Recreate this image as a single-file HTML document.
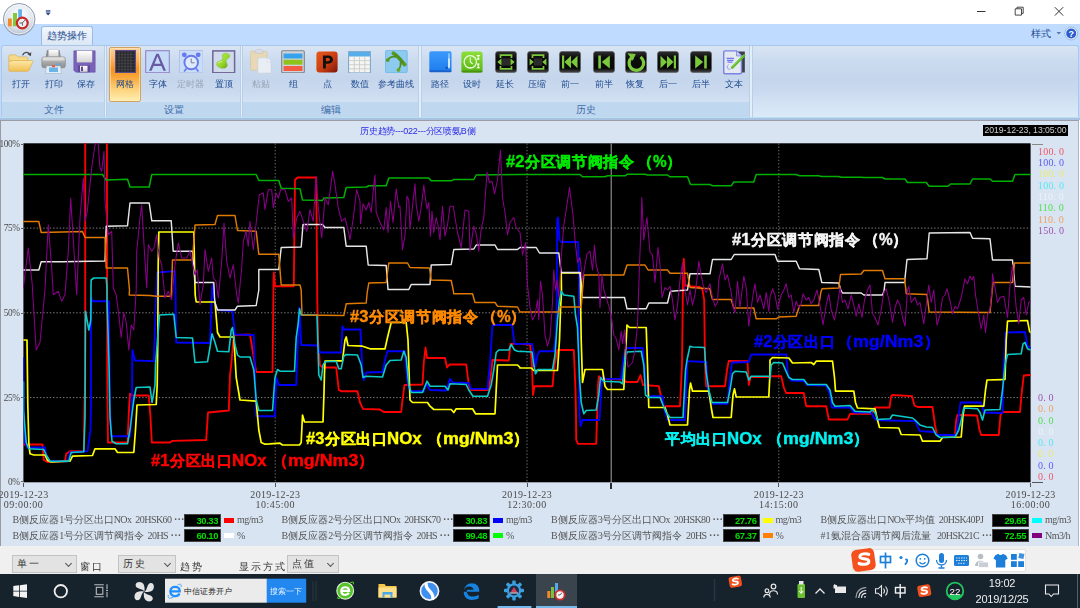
<!DOCTYPE html>
<html lang="zh">
<head>
<meta charset="utf-8">
<title>历史趋势</title>
<style>
*{box-sizing:border-box;margin:0;padding:0}
html,body{width:1080px;height:608px;overflow:hidden;background:#fff}
body{position:relative;font-family:"Liberation Sans",sans-serif;font-size:10px;color:#15428b}
#stage{position:absolute;left:0;top:0;width:1080px;height:608px;filter:blur(.45px)}
.abs{position:absolute}
#titlebar{left:0;top:0;width:1080px;height:24px;background:#fff}
#tabrow{left:0;top:24px;width:1080px;height:20px;background:#bfdbff}
#ribbon{left:0;top:44px;width:1080px;height:76px;background:#bfdbff}
.rl{position:absolute;top:78px;width:60px;text-align:center;font-size:9.300px;line-height:12px;color:#1e4a8e;white-space:nowrap}
.rl.dis{color:#98a3b3}
.hotbtn{background:linear-gradient(#fbd09c 0,#f9b25c 22%,#f7931e 40%,#f9a63a 55%,#fdd581 80%,#feeeb0 100%);border:1px solid #d3a35c;border-radius:2px;box-shadow:inset 0 0 0 1px rgba(255,240,200,.5)}
.btn{position:absolute;top:46px;width:34px;height:56px;text-align:center}
.btn svg{position:absolute;left:50%;top:2px;margin-left:-13px;width:26px;height:26px}
.btn span{position:absolute;left:-10px;right:-10px;top:32px;line-height:12px;font-size:10px;color:#15428b;white-space:nowrap}
.btn.dis span{color:#8d9aae}
.btn.hot{background:linear-gradient(#f8b665 0,#f99a2e 30%,#fb9322 45%,#fdc765 75%,#fee9a6 100%);border:1px solid #c99a56;border-radius:2px}
#rpanel{position:absolute;left:1px;top:.5px;width:1078px;height:73.500px;border:1px solid #aac6e8;border-bottom:none;border-radius:3px 3px 0 0;background:linear-gradient(#d9e5f4 0,#cbdbef 20%,#c5d6ec 45%,#cad9ee 62%,#d6e5f5 85%,#dcebf9 100%)}
.cap{position:absolute;top:58.400px;height:15px;background:#c0d8ef;color:#3e6aaa;text-align:center;line-height:15px;font-size:9.600px}
.sep{position:absolute;top:2px;width:1.600px;height:72px;background:#e2eefa;box-shadow:-1px 0 0 #b9cfe9,1px 0 0 #b9cfe9}
#rb1{left:0;top:117.400px;width:1080px;height:1px;background:#b9e0ee}
#rb2{left:0;top:118.400px;width:1080px;height:1.600px;background:#a9c2e2}
#panel{left:0;top:120px;width:1079px;height:426px;background:#d8e4f2;border-left:1.300px solid #9a9aa2;border-top:1px solid #9c9ca6;border-right:1px solid #a9b4c6}
.plot{position:absolute;left:0;top:0}
.ax{position:absolute;font-family:"Liberation Serif",serif;font-size:10px;color:#4a4a4a;white-space:nowrap;line-height:10px}
.yl{width:20px;text-align:right;left:-.5px;font-size:9.300px;letter-spacing:-.45px}
.xl{width:80px;text-align:center;line-height:10.5px}
.rv{position:absolute;left:1038px;font-family:"Liberation Serif",serif;font-size:10px;line-height:11px;white-space:nowrap;letter-spacing:.2px}
.lg{position:absolute;font-family:"Liberation Serif",serif;font-size:10px;color:#555;white-space:nowrap;line-height:12px}
.lg .l{letter-spacing:-.55px}
.vb{position:absolute;width:37px;height:13px;background:#000;border:1px solid #444;color:#00dd00;font-family:"Liberation Sans",sans-serif;font-size:9.500px;font-weight:bold;letter-spacing:-.45px;line-height:11px;text-align:right;padding-right:2px}
.sw{position:absolute;width:10px;height:5px;margin-left:-.7px}
#toolbar{left:0;top:546px;width:1080px;height:28.500px;background:#f0f0f0}
.combo{position:absolute;top:9px;height:18px;background:#e3e3e3;border:1px solid #c3c3c3;font-size:10px;color:#333;line-height:16px;padding-left:4px;letter-spacing:2px}
.combo i{position:absolute;right:5px;top:5px;width:5px;height:5px;border-right:1px solid #555;border-bottom:1px solid #555;transform:rotate(45deg)}
.tl{position:absolute;top:15px;font-size:10px;color:#333;line-height:12px;letter-spacing:2px;white-space:nowrap}
#taskbar{left:0;top:574px;width:1080px;height:40px;background:#16222c}
.cl{position:absolute;font-weight:bold;font-size:16px;line-height:18px;white-space:nowrap;-webkit-text-stroke:.4px currentColor}
</style>
</head>
<body>
<div id="stage">
<div id="titlebar" class="abs"></div>
<div id="tabrow" class="abs"></div>
<div id="ribbon" class="abs">
  <div id="rpanel"></div>
  <div class="cap" style="left:2px;width:103px">文件</div>
  <div class="cap" style="left:106.500px;width:134.500px">设置</div>
  <div class="cap" style="left:242.500px;width:177px">编辑</div>
  <div class="cap" style="left:421px;width:329.500px">历史</div>
  <div class="sep" style="left:104.700px"></div>
  <div class="sep" style="left:240.800px"></div>
  <div class="sep" style="left:419.300px"></div>
  <div class="sep" style="left:750.200px"></div>
</div>
<div id="rb1" class="abs"></div><div id="rb2" class="abs"></div>
<svg width="0" height="0" style="position:absolute"><defs>
<linearGradient id="gFold" x1="0" y1="0" x2="0" y2="1"><stop offset="0" stop-color="#fde9a8"/><stop offset="1" stop-color="#f2bf52"/></linearGradient>
<linearGradient id="gPr" x1="0" y1="0" x2="0" y2="1"><stop offset="0" stop-color="#d8d8d8"/><stop offset=".5" stop-color="#a8a8a8"/><stop offset="1" stop-color="#8c8c8c"/></linearGradient>
<linearGradient id="gWh" x1="0" y1="0" x2="0" y2="1"><stop offset="0" stop-color="#ffffff"/><stop offset="1" stop-color="#d4d4d4"/></linearGradient>
<linearGradient id="gP" x1="0" y1="0" x2="1" y2="1"><stop offset="0" stop-color="#ea5a1c"/><stop offset=".55" stop-color="#c83c12"/><stop offset="1" stop-color="#7a1606"/></linearGradient>
<linearGradient id="gBl" x1="0" y1="0" x2="0" y2="1"><stop offset="0" stop-color="#3b98fa"/><stop offset="1" stop-color="#1c7df0"/></linearGradient>
<linearGradient id="gGr" x1="0" y1="0" x2="0" y2="1"><stop offset="0" stop-color="#8ee03a"/><stop offset="1" stop-color="#58b414"/></linearGradient>
<linearGradient id="gDk" x1="0" y1="0" x2="0" y2="1"><stop offset="0" stop-color="#2e2e2e"/><stop offset=".3" stop-color="#0c0c0c"/><stop offset=".8" stop-color="#080808"/><stop offset="1" stop-color="#4a4a4a"/></linearGradient>
<linearGradient id="gPin" x1="0" y1="0" x2="1" y2="1"><stop offset="0" stop-color="#b8ec50"/><stop offset=".55" stop-color="#98d82c"/><stop offset="1" stop-color="#5e9e12"/></linearGradient>
<radialGradient id="gOrb" cx=".5" cy=".35" r=".7"><stop offset="0" stop-color="#ffffff"/><stop offset=".6" stop-color="#dfe6ee"/><stop offset="1" stop-color="#aab6c6"/></radialGradient>
</defs></svg>
<svg class="abs" style="left:8px;top:50px" width="26" height="23" viewBox="0 0 26 23"><path d="M.8 6.500c0-1 .6-1.600 1.600-1.600h5.800l1.800 2h8.200c1 0 1.500.5 1.500 1.500v2.600H.8z" fill="#f7d98a" stroke="#d9a93e" stroke-width=".6"/><path d="M4.800 10.500h19.400c.7 0 1 .5.700 1.100l-4 8.800c-.3.600-.8.900-1.500.9H1.800c-.7 0-1-.4-1-1.100V11.800z" fill="url(#gFold)" stroke="#d9a93e" stroke-width=".6"/><path d="M14.500 5.200c1.500-3.600 5.500-3.800 7.400-.8" fill="none" stroke="#4a4a4a" stroke-width="1.300"/><path d="M23.300 2.200l-.4 4-3.400-1.900z" fill="#4a4a4a"/></svg>
<div class="rl" style="left:-9.5px">打开</div>
<svg class="abs" style="left:41px;top:49px" width="26" height="25" viewBox="0 0 26 25"><path d="M6 1h12.500l1.500 8H4.500z" fill="#8c8c8c"/><rect x="7.500" y=".8" width="10" height="7" fill="url(#gWh)" stroke="#bbb" stroke-width=".4"/><rect x=".8" y="7.800" width="23.600" height="11" rx="2.200" fill="url(#gPr)" stroke="#7c7c7c" stroke-width=".5"/><rect x="1.600" y="8.500" width="22" height="3" rx="1.500" fill="#e6e6e6" opacity=".7"/><path d="M5.500 17h14l1 7.500h-16z" fill="#e4eefa" stroke="#9ab" stroke-width=".5"/><rect x="8" y="18.500" width="9" height="4.500" fill="#6ab4e8"/><rect x="11" y="16.300" width="3" height="2" fill="#e85a3a"/><rect x="15" y="14.500" width="5" height="1.300" fill="#58a8e8"/></svg>
<div class="rl" style="left:23.6px">打印</div>
<svg class="abs" style="left:73px;top:49.5px" width="23" height="23" viewBox="0 0 23 23"><path d="M.8.800h21.400v21.400H2.800l-2-2z" fill="#7a62b8" stroke="#5e4a9a" stroke-width=".5"/><rect x="3.800" y=".9" width="15.400" height="11.500" fill="url(#gWh)"/><rect x="5" y="15.200" width="12" height="7" fill="#5e4a9a"/><rect x="7" y="15.800" width="7.500" height="6" fill="url(#gWh)"/><rect x="8" y="16.600" width="2" height="4.500" fill="#5e4a9a"/></svg>
<div class="rl" style="left:55.5px">保存</div>
<div class="abs hotbtn" style="left:108.800px;top:46.500px;width:32.400px;height:55.300px"></div>
<svg class="abs" style="left:115px;top:49.6px" width="21" height="23" viewBox="0 0 21 23"><rect x=".6" y=".6" width="19.800" height="21.800" fill="#26262b" stroke="#5b4a8a" stroke-width="1.200"/><path d="M4 1.500v20M7 1.500v20M10 1.500v20M13 1.500v20M16 1.500v20" stroke="#5a5a60" stroke-width=".7"/><path d="M1.500 4.500h18M1.500 7.500h18M1.500 10.500h18M1.500 13.500h18M1.500 16.500h18M1.500 19.500h18" stroke="#45454a" stroke-width=".6"/></svg>
<div class="rl" style="left:95px">网格</div>
<svg class="abs" style="left:145px;top:49.6px" width="25" height="23.5" viewBox="0 0 25 23.5"><rect x=".7" y=".7" width="23.600" height="22" fill="#c4dbf7" stroke="#9484c4" stroke-width="1.100"/><path d="M4 20.800L11.300 3.800h2.400L21 20.800h-2.600l-2-4.800H8.600l-2 4.800zM9.500 13.800h6l-3-7.600z" fill="#6a5aa4"/></svg>
<div class="rl" style="left:127.5px">字体</div>
<svg class="abs" style="left:178.5px;top:49.6px" width="24.5" height="23.5" viewBox="0 0 24.5 23.5"><rect x=".5" y=".5" width="23.500" height="22.300" fill="#c8def8" stroke="#b4b8e6" stroke-width=".8"/><circle cx="12.200" cy="12.500" r="6.800" fill="#ddeafc" stroke="#6878f0" stroke-width="1.900"/><circle cx="5.300" cy="4.800" r="2.400" fill="#6878f0"/><circle cx="19.200" cy="4.800" r="2.400" fill="#6878f0"/><path d="M7.500 18.500l-2.500 3M17 18.500l2.500 3" stroke="#6878f0" stroke-width="1.700"/><path d="M12.200 8.500v4.300h3.300" fill="none" stroke="#7a7a8a" stroke-width="1"/></svg>
<div class="rl dis" style="left:160.5px">定时器</div>
<svg class="abs" style="left:212.1px;top:49.8px" width="23.5" height="23.7" viewBox="0 0 23.5 23.7"><rect x=".8" y=".9" width="21.800" height="21.900" fill="#cfdaec" stroke="#6f6598" stroke-width="1.500"/><path d="M8.300 19l-1.200 2" stroke="#e4e4e4" stroke-width=".9"/><path d="M10.300 5C10.800 3.500 13.500 3 15.500 3.500 17.500 4 18.300 5.500 17.600 7 17 8.300 14.800 8.800 14.200 10.200 13.700 11.500 15.200 13 15.300 15 15.400 17.500 13 18.600 10.300 18.300 7 17.900 4.300 16 4.500 13.700 4.700 11.800 7 11.300 8.700 10.600 10.300 10 10.800 9 10.600 7.800 10.400 6.800 10 6 10.300 5z" fill="url(#gPin)" stroke="#6aa822" stroke-width=".3"/><path d="M6.200 13.200c.6-1.300 2.300-1.900 3.600-1.600" fill="none" stroke="#e0f8a0" stroke-width="1" stroke-linecap="round" opacity=".8"/></svg>
<div class="rl" style="left:193.5px">置顶</div>
<svg class="abs" style="left:250px;top:49px" width="22" height="25" viewBox="0 0 22 25"><rect x=".6" y="2.200" width="16.500" height="19" rx="1.300" fill="#e8d8b4" stroke="#d2c09a" stroke-width=".6"/><path d="M5 3.300c0-2 2-3 4-3s4 1 4 3v1H5z" fill="#d9dde3" stroke="#b8bcc4" stroke-width=".5"/><path d="M7.800 8.800h9.400l4 4v11.400H7.800z" fill="#e9edf4" stroke="#c5cbd6" stroke-width=".6"/><path d="M17.200 8.800v4h4" fill="#f6f8fb" stroke="#c5cbd6" stroke-width=".5"/></svg>
<div class="rl dis" style="left:231px">粘贴</div>
<svg class="abs" style="left:281px;top:49.6px" width="24" height="23.5" viewBox="0 0 24 23.5"><rect x=".7" y=".7" width="22.600" height="22" rx="1.200" fill="#d0d4da" stroke="#7c828c" stroke-width="1.100"/><rect x="2.500" y="3.500" width="19" height="5" fill="#36a2ec"/><rect x="2.500" y="9.700" width="19" height="5" fill="#8cc41c"/><rect x="2.500" y="16" width="19" height="5" fill="#f25c42"/></svg>
<div class="rl" style="left:263px">组</div>
<svg class="abs" style="left:316px;top:50.8px" width="22" height="22" viewBox="0 0 22 22"><rect x=".4" y=".4" width="21.200" height="21.200" rx="3" fill="url(#gP)"/><path d="M7 17.500V4.500h5.200c3.200 0 4.800 1.700 4.800 4.100s-1.700 4.100-4.800 4.100H9.900v4.800zM9.900 7v3.300h2c1.300 0 2-.6 2-1.700 0-1-.7-1.600-2-1.600z" fill="#141010"/></svg>
<div class="rl" style="left:297px">点</div>
<svg class="abs" style="left:348px;top:50.5px" width="23" height="22.5" viewBox="0 0 23 22.5"><rect x=".6" y=".6" width="21.800" height="21.300" fill="#f4f4f2" stroke="#7aa4c8" stroke-width="1"/><rect x="1" y="1" width="21" height="4.500" fill="#58aee8"/><path d="M1 9.600h21M1 13.700h21M1 17.800h21M6.300 5.500v16M11.500 5.500v16M16.800 5.500v16" stroke="#c8c8c4" stroke-width=".8"/></svg>
<div class="rl" style="left:329.5px">数值</div>
<svg class="abs" style="left:385px;top:50.2px" width="22.6" height="23" viewBox="0 0 22.6 23"><rect x=".4" y=".4" width="21.800" height="22.300" rx="1.200" fill="#8ccaf0" stroke="#6ab4e6" stroke-width=".8"/><path d="M8.500 3.200C11.500 5 16 10 19.600 14.500" fill="none" stroke="#4f8f1c" stroke-width="3.400" stroke-linecap="round"/><path d="M2.600 10.100C4.500 7.200 7.500 6.200 10.800 6.800" fill="none" stroke="#4f8f1c" stroke-width="1.900" stroke-linecap="round"/><path d="M15.600 11.500C16.200 15 15.300 17.500 13.500 19.900" fill="none" stroke="#4f8f1c" stroke-width="1.700" stroke-linecap="round"/><circle cx="8.500" cy="3.400" r="1.900" fill="#5a9a20"/><circle cx="2.700" cy="10.100" r="1.900" fill="#5a9a20"/><circle cx="19.500" cy="14.500" r="2" fill="#5a9a20"/><circle cx="13.500" cy="19.900" r="1.900" fill="#66a824"/></svg>
<div class="rl" style="left:366px">参考曲线</div>
<svg class="abs" style="left:428.5px;top:50.8px" width="23" height="21.8" viewBox="0 0 23 21.8"><rect x=".3" y=".3" width="22.200" height="20.800" rx="1.800" fill="url(#gBl)"/><rect x="0.300" y="19.300" width="22.200" height="2" rx="1" fill="#1a62c8"/><rect x="19" y="2" width="2" height="15.500" rx="1" fill="#7ec0ff"/><rect x="19" y="7.500" width="2" height="9" fill="#cfe8ff"/><rect x="16.500" y="15.800" width="2.200" height="2.200" fill="#1552b4"/></svg>
<div class="rl" style="left:410px">路径</div>
<svg class="abs" style="left:461px;top:50.8px" width="22" height="22" viewBox="0 0 22 22"><rect x=".4" y=".4" width="21.200" height="21" rx="2.800" fill="url(#gGr)"/><rect x=".4" y="19.600" width="21.200" height="1.800" rx=".9" fill="#4a9410"/><circle cx="9.300" cy="10.800" r="6.200" fill="none" stroke="#eefae0" stroke-width="1.300"/><path d="M9.300 6.500v4.500l2.500 2" fill="none" stroke="#eefae0" stroke-width="1.100"/><path d="M15.300 4l2 2.600 2-2.600zM15.300 17.300l2-2.600 2 2.600z" fill="#f4fce8"/><rect x="16.300" y="6.500" width="2" height="2.500" fill="#f4fce8"/><rect x="16.300" y="12.300" width="2" height="2.500" fill="#f4fce8"/></svg>
<div class="rl" style="left:441.8px">设时</div>
<svg class="abs" style="left:494.5px;top:50.8px" width="22" height="22" viewBox="0 0 22 22"><rect x=".5" y=".5" width="21" height="21" rx="2.5" fill="url(#gDk)" stroke="#5a5a5a" stroke-width=".6"/><path d="M5.500 7V4.200h11V7M5.500 15v2.800h11V15" fill="none" stroke="#7cc83c" stroke-width="1.700"/><rect x="7" y="7.300" width="8" height="7.400" fill="#2a2a2a"/><path d="M2.300 11l4.200-3.400v6.800zM19.700 11l-4.200-3.400v6.800z" fill="#7cc83c"/></svg>
<div class="rl" style="left:475px">延长</div>
<svg class="abs" style="left:526.5px;top:50.8px" width="22" height="22" viewBox="0 0 22 22"><rect x=".5" y=".5" width="21" height="21" rx="2.5" fill="url(#gDk)" stroke="#5a5a5a" stroke-width=".6"/><path d="M5.500 7V4.200h11V7M5.500 15v2.800h11V15" fill="none" stroke="#7cc83c" stroke-width="1.700"/><rect x="7" y="7.300" width="8" height="7.400" fill="#2a2a2a"/><path d="M6.800 11L2.600 7.600v6.800zM15.200 11l4.200-3.400v6.800z" fill="#7cc83c"/></svg>
<div class="rl" style="left:507px">压缩</div>
<svg class="abs" style="left:558.5px;top:50.8px" width="22" height="22" viewBox="0 0 22 22"><rect x=".5" y=".5" width="21" height="21" rx="2.5" fill="url(#gDk)" stroke="#5a5a5a" stroke-width=".6"/><rect x="3" y="4.500" width="2.200" height="13" fill="#7cc83c"/><path d="M5.500 11l6.500-6.300v12.600zM12 11l6.500-6.300v12.600z" fill="#7cc83c"/></svg>
<div class="rl" style="left:539.5px">前一</div>
<svg class="abs" style="left:593px;top:50.8px" width="22" height="22" viewBox="0 0 22 22"><rect x=".5" y=".5" width="21" height="21" rx="2.5" fill="url(#gDk)" stroke="#5a5a5a" stroke-width=".6"/><rect x="5.300" y="4.500" width="2.600" height="13" fill="#7cc83c"/><path d="M8.800 11l8-6.500v13z" fill="#7cc83c"/></svg>
<div class="rl" style="left:573.5px">前半</div>
<svg class="abs" style="left:624.5px;top:50.8px" width="22" height="22" viewBox="0 0 22 22"><rect x=".5" y=".5" width="21" height="21" rx="2.5" fill="url(#gDk)" stroke="#5a5a5a" stroke-width=".6"/><path d="M7 6.200A7.300 7.300 0 1 0 15.500 6" fill="none" stroke="#7cc83c" stroke-width="3.300"/><path d="M2.500 2.200l8.300.8-3 6.800z" fill="#7cc83c"/></svg>
<div class="rl" style="left:605px">恢复</div>
<svg class="abs" style="left:656.8px;top:50.8px" width="22" height="22" viewBox="0 0 22 22"><rect x=".5" y=".5" width="21" height="21" rx="2.5" fill="url(#gDk)" stroke="#5a5a5a" stroke-width=".6"/><rect x="16.800" y="4.500" width="2.200" height="13" fill="#7cc83c"/><path d="M16.500 11L10 4.700v12.600zM10 11L3.500 4.700v12.600z" fill="#7cc83c"/></svg>
<div class="rl" style="left:637.5px">后一</div>
<svg class="abs" style="left:689.5px;top:50.8px" width="22" height="22" viewBox="0 0 22 22"><rect x=".5" y=".5" width="21" height="21" rx="2.5" fill="url(#gDk)" stroke="#5a5a5a" stroke-width=".6"/><rect x="14.200" y="4.500" width="2.600" height="13" fill="#7cc83c"/><path d="M13.200 11l-8-6.500v13z" fill="#7cc83c"/></svg>
<div class="rl" style="left:670.5px">后半</div>
<svg class="abs" style="left:722.5px;top:50px" width="23" height="24.5" viewBox="0 0 23 24.5"><path d="M14 1.400h7.800v21.200h-4z" fill="#3e3e48"/><path d="M2.200.9h11.300l5 5v16.400c0 .9-.6 1.500-1.500 1.500H2.200c-.9 0-1.500-.6-1.500-1.500V2.400c0-.9.600-1.500 1.500-1.500z" fill="#e4e8f0" stroke="#7a82e2" stroke-width="1.400"/><path d="M13.500.9v5h5" fill="#c8d0f4" stroke="#7a82e2" stroke-width=".8"/><path d="M3.500 8.300h7.500M4 10.300h6.500M4.500 12.200h5" stroke="#7078ee" stroke-width="1.300"/><path d="M5.500 14.500c-2.500 2.500-1 5.500 2 4.500" fill="none" stroke="#8a90e8" stroke-width=".9"/><path d="M9.200 17.600L21 5.600" stroke="#5cba2a" stroke-width="2.600" stroke-linecap="round"/><path d="M9.800 16.200L20.200 5.600" stroke="#8ee050" stroke-width=".8" stroke-linecap="round"/></svg>
<div class="rl" style="left:703.5px">文本</div>
<svg class="abs" style="left:0;top:0" width="1080" height="46" viewBox="0 0 1080 46">
<circle cx="19.200" cy="19.300" r="15.800" fill="url(#gOrb)" stroke="#8e9aac" stroke-width="1"/>
<circle cx="19.200" cy="19.300" r="14.600" fill="none" stroke="#fff" stroke-width=".8" opacity=".8"/>
<rect x="8" y="18.500" width="3.800" height="7.800" fill="#f08a28"/><rect x="13" y="13" width="4" height="13.300" fill="#84c83c"/><rect x="18.200" y="9.300" width="3.800" height="12" fill="#62b0ec"/>
<circle cx="22.300" cy="23" r="5.400" fill="#f0f0f0" stroke="#c82828" stroke-width="2.200"/><path d="M22.300 23l2.500-2.800M22.300 23h-2.800M22.300 23l.3 2.600" stroke="#505060" stroke-width=".9" fill="none"/>
<rect x="45.800" y="10.300" width="4.600" height="1.300" fill="#23407c"/><path d="M45.600 12.600h5l-2.500 2.800z" fill="#23407c"/>
<path d="M977 11.500h8.500" stroke="#333" stroke-width="1"/>
<path d="M1015.200 8.800h6.300v6.300h-6.300zM1017 8.800v-1.600h6.200v6.200h-1.700" fill="none" stroke="#333" stroke-width=".9"/>
<path d="M1054.800 7.200l8.400 8.400M1063.200 7.200l-8.400 8.400" stroke="#333" stroke-width="1"/>
<path d="M1056.500 32l2.300 2.500 2.300-2.500z" fill="#5a78a8"/>
<circle cx="1071.200" cy="33.500" r="5.600" fill="#2a5cd0" stroke="#dfe9f7" stroke-width="1.200"/><circle cx="1071.200" cy="33.500" r="6.500" fill="none" stroke="#8aa6d0" stroke-width=".6"/>
</svg>
<div class="abs" style="left:1065.200px;top:27.500px;width:12px;text-align:center;font-size:9px;font-weight:bold;line-height:12px;color:#fff">?</div>
<div class="abs" id="tab" style="left:40.500px;top:25.500px;width:52.500px;height:19.500px;border:1px solid #9bbbe3;border-bottom:none;border-radius:3px 3px 0 0;background:linear-gradient(#f2f7fd,#dbe7f5);text-align:center;font-size:9.600px;line-height:18px;color:#1e4a8e;white-space:nowrap">趋势操作</div>
<div class="abs" style="left:1031px;top:27.500px;font-size:9.600px;line-height:12px;color:#1e4a8e;white-space:nowrap">样式</div>
<div id="panel" class="abs"></div>
<svg class="plot" width="1080" height="608" viewBox="0 0 1080 608">
<defs><clipPath id="pc"><rect x="23.4" y="143.3" width="1007.2" height="339.0"/></clipPath></defs>
<rect x="23.4" y="143.3" width="1007.2" height="339.0" fill="#000"/>
<g clip-path="url(#pc)">
<line x1="23.4" y1="228.1" x2="1030.6" y2="228.1" stroke="#a0a0a0" stroke-width="0.8" stroke-dasharray="1.4 1.9"/>
<line x1="23.4" y1="312.8" x2="1030.6" y2="312.8" stroke="#a0a0a0" stroke-width="0.8" stroke-dasharray="1.4 1.9"/>
<line x1="23.4" y1="397.6" x2="1030.6" y2="397.6" stroke="#a0a0a0" stroke-width="0.8" stroke-dasharray="1.4 1.9"/>
<line x1="275.2" y1="143.3" x2="275.2" y2="482.3" stroke="#8c8c8c" stroke-width="0.8" stroke-dasharray="1.4 1.9"/>
<line x1="527.0" y1="143.3" x2="527.0" y2="482.3" stroke="#8c8c8c" stroke-width="0.8" stroke-dasharray="1.4 1.9"/>
<line x1="778.8" y1="143.3" x2="778.8" y2="482.3" stroke="#8c8c8c" stroke-width="0.8" stroke-dasharray="1.4 1.9"/>
<line x1="611.2" y1="143.3" x2="611.2" y2="482.3" stroke="#a4a4a4" stroke-width="1"/>
<polyline points="23.5,444.5 42.5,444.5 43.8,460.0 47.5,462.0 65.0,461.2 66.2,453.8 70.0,451.2 83.8,451.2 84.5,405.0 85.2,380.0 85.2,143.6" fill="none" stroke="#ff0000" stroke-width="1.85" stroke-linejoin="round" stroke-linecap="round"/>
<polyline points="106.9,143.6 107.3,380.0 108.0,442.5 127.5,442.5 129.2,405.0 130.0,393.8 132.5,395.5 148.8,395.5 150.5,417.5 151.8,442.5 170.0,442.5 172.5,440.8 206.2,440.0 208.0,412.5 228.8,410.5 230.0,375.0 231.2,365.0 233.8,335.0 250.0,334.5 252.5,350.0 256.2,372.0 272.5,372.0 273.2,315.0 273.5,280.0 273.8,272.5 275.0,286.2 275.0,286.2 293.8,286.2 295.0,180.0 297.5,177.5 316.2,177.5 317.2,287.5 317.2,295.0 318.0,340.0 320.0,365.0 322.5,367.5 336.2,367.5 338.8,390.0 341.2,391.2 357.5,391.2 360.0,402.5 363.0,408.8 380.0,409.5 383.8,412.0 401.2,412.0 402.5,400.0 404.5,385.0 422.5,384.5 423.8,362.5 425.5,347.5 427.0,358.0 445.0,358.0 447.0,367.5 449.5,364.5 466.2,364.5 468.8,385.0 471.2,390.0 488.8,390.0 491.2,372.5 492.5,360.0 508.8,360.5 510.5,343.8 520.0,343.8 520.0,343.8 530.0,344.5 532.0,365.0 533.0,395.0 534.5,386.2 552.5,386.2 554.5,365.0 557.5,350.0 573.8,350.0 575.5,390.0 576.0,415.0 576.2,440.0 578.0,443.8 596.2,443.8 597.5,405.0 598.0,385.0 598.8,376.2 601.2,378.8 623.8,379.5 626.2,382.0 637.5,382.0 640.5,375.0 643.0,385.0 658.8,386.2 661.2,397.5 663.8,406.2 680.0,406.2 682.0,365.0 682.8,300.0 683.0,280.0 683.8,258.8 685.0,285.0 687.5,286.2 700.0,287.0 702.5,290.0 704.2,300.0 705.0,365.0 706.2,386.2 725.0,386.2 727.0,370.0 728.8,360.8 747.5,361.2 748.8,385.0 750.5,377.0 770.0,377.0 770.0,376.2 781.2,376.2 783.8,387.5 786.2,393.0 803.8,393.0 806.2,406.2 826.2,406.2 828.8,419.5 847.5,419.5 850.0,413.8 871.2,413.8 875.0,407.5 889.5,407.5 891.2,396.2 892.5,395.0 912.0,396.2 914.5,405.5 917.5,407.0 932.5,407.0 935.0,425.0 937.0,435.0 955.0,435.0 956.2,420.0 957.5,415.0 977.0,415.5 979.5,430.0 981.2,435.0 998.8,435.0 1000.5,415.0 1002.5,412.0 1020.0,412.0 1022.0,390.0 1023.8,375.5 1030.5,375.0" fill="none" stroke="#ff0000" stroke-width="1.85" stroke-linejoin="round" stroke-linecap="round"/>
<polyline points="23.5,358.0 23.5,405.0 25.0,442.5 27.5,447.5 45.0,447.5 46.2,455.0 50.0,461.2 67.5,461.2 70.0,452.5 87.5,451.2 90.5,430.0 91.0,405.0 91.0,340.0 91.2,297.5 92.5,301.2 108.8,301.2 109.5,365.0 109.8,405.0 111.2,436.2 130.0,436.2 132.0,405.0 132.2,365.0 132.5,350.0 135.0,360.5 153.8,361.2 156.2,292.5 156.5,287.5 157.0,272.5 175.0,271.2 175.5,290.0 175.8,315.0 176.2,342.5 210.0,343.0 211.8,297.5 212.2,287.5 212.8,284.5 213.5,290.0 214.5,302.5 217.5,310.0 232.5,311.2 235.0,334.5 253.8,335.0 256.2,416.2 275.0,416.2 276.2,377.5 278.8,385.0 296.2,385.0 298.0,340.0 299.5,307.5 301.2,345.0 317.5,345.5 320.0,352.5 341.2,352.5 342.5,326.2 344.5,329.5 360.5,329.5 362.5,372.5 363.8,380.0 366.2,372.5 382.5,372.0 385.0,360.0 387.5,351.2 405.0,351.2 407.0,377.5 409.5,391.2 423.8,391.2 426.2,383.8 430.0,390.0 446.2,390.5 448.8,382.5 450.0,378.8 452.5,382.5 468.8,383.0 471.2,388.8 487.5,388.8 490.0,362.5 492.5,325.0 512.0,325.0 514.5,343.8 520.0,344.0 520.0,343.8 532.0,343.8 533.8,352.5 535.5,366.2 537.5,355.0 539.5,351.2 553.8,351.2 555.8,335.0 556.5,312.5 556.8,295.0 557.0,265.0 557.2,220.0 558.0,217.5 559.5,240.0 561.2,242.0 578.0,242.0 579.0,280.0 578.5,315.0 578.8,340.0 579.5,415.0 580.5,426.2 582.5,420.0 599.5,420.0 601.2,390.0 602.5,376.2 605.0,378.8 621.2,378.8 623.0,362.5 625.0,350.0 627.5,348.0 642.5,348.0 644.5,365.0 647.0,390.0 648.8,396.2 662.5,396.2 664.5,410.0 667.5,420.0 685.0,420.0 686.2,390.0 687.5,361.2 706.2,362.0 708.0,390.0 711.2,403.8 727.5,403.8 730.0,377.5 732.0,362.5 748.8,362.0 751.2,354.5 770.0,354.5 770.0,354.5 786.2,354.5 788.0,375.0 791.2,380.5 803.8,381.2 807.5,385.0 826.2,385.5 830.0,395.0 832.0,407.5 850.0,407.5 853.8,412.5 871.2,412.5 873.8,417.5 876.2,420.0 890.0,420.5 915.0,421.2 917.5,426.2 920.0,431.2 933.8,432.0 937.5,435.0 956.2,435.0 958.8,415.0 960.5,402.5 981.2,402.5 983.8,412.5 1002.5,413.0 1003.8,365.0 1005.5,332.5 1025.0,332.0 1027.5,346.2 1030.5,347.5" fill="none" stroke="#0000ff" stroke-width="1.85" stroke-linejoin="round" stroke-linecap="round"/>
<polyline points="23.5,340.0 27.0,340.0 27.5,380.0 27.8,405.0 28.8,442.5 30.0,453.8 33.8,455.0 45.0,455.0 47.5,460.5 51.2,462.0 70.0,461.2 72.5,456.2 92.5,455.5 95.0,448.8 115.0,448.8 117.5,452.5 133.8,452.5 135.5,430.0 137.0,405.0 156.2,404.5 157.2,385.0 157.8,340.0 158.0,297.5 158.2,265.0 158.8,232.0 193.8,232.0 194.8,280.0 195.2,295.0 196.2,302.0 215.0,302.0 217.5,332.5 220.0,337.0 233.8,337.0 236.2,377.5 240.0,400.0 256.2,401.2 258.8,430.0 261.2,442.5 265.0,444.2 270.0,444.0 270.0,443.8 280.0,443.2 282.5,445.0 299.5,445.0 301.2,442.5 302.5,415.0 304.5,422.0 323.0,422.0 324.0,392.5 324.5,372.5 325.0,361.2 336.2,360.8 342.5,360.8 345.0,340.0 346.2,337.0 348.0,345.5 362.5,346.2 370.0,348.8 385.0,348.8 387.5,337.5 391.2,322.5 406.2,322.5 408.0,340.0 410.0,400.0 412.5,402.5 427.5,402.5 430.0,406.2 433.8,409.5 451.2,409.5 453.8,412.5 456.2,408.8 472.5,408.8 475.5,413.8 495.0,413.8 496.2,390.0 497.5,365.0 517.5,365.0 520.0,367.5 520.0,368.0 531.2,368.0 533.8,370.5 557.5,370.5 559.5,340.0 560.5,310.0 561.5,292.5 561.2,272.8 580.4,272.8 580.8,315.0 581.2,340.0 582.5,382.5 585.0,369.5 602.5,369.5 605.0,386.2 607.5,389.5 623.8,389.5 625.5,352.5 627.0,325.0 629.5,327.5 646.2,327.5 647.5,365.0 648.8,407.5 665.0,407.5 667.5,415.0 670.0,425.0 687.5,425.0 689.5,390.0 690.5,383.0 692.5,391.2 708.8,391.2 711.2,407.5 713.0,417.5 731.2,417.5 733.0,395.0 734.5,388.8 736.2,397.0 768.8,397.0 770.0,372.5 770.0,360.0 772.5,357.5 788.8,358.0 792.5,363.0 811.2,362.5 813.8,364.5 816.2,361.2 832.5,361.2 834.5,377.5 835.5,391.2 853.8,391.2 855.5,402.5 857.5,408.0 875.0,408.8 877.5,420.0 879.5,427.5 898.8,428.0 901.2,434.5 920.0,435.0 922.5,441.2 940.0,441.2 942.5,437.5 961.2,437.0 963.0,415.0 964.5,406.2 983.8,406.2 985.5,390.0 987.0,380.0 1005.0,379.5 1006.2,340.0 1007.5,321.2 1027.5,320.5 1029.5,331.2 1030.5,332.5" fill="none" stroke="#ffff00" stroke-width="1.7" stroke-linejoin="round" stroke-linecap="round"/>
<polyline points="23.5,382.0 23.5,410.0 26.2,442.5 28.8,448.8 43.8,449.5 46.2,455.0 50.0,461.2 68.8,461.2 71.2,452.5 83.8,451.8 85.0,417.5 85.2,365.0 85.5,311.2 88.8,330.0 90.8,320.0 91.0,297.5 91.0,287.5 91.2,280.0 93.8,278.0 106.2,278.0 107.0,287.5 107.0,302.5 107.5,315.0 109.0,365.0 110.0,417.5 112.0,441.2 116.2,443.8 127.5,443.8 130.0,430.0 133.8,400.0 136.2,387.5 150.0,387.0 152.0,402.5 153.8,392.5 155.0,385.0 155.5,365.0 157.5,340.0 159.5,315.0 173.8,314.2 176.2,337.5 192.5,338.0 195.0,362.5 207.5,361.8 210.0,347.5 212.0,333.8 215.0,342.5 217.5,351.2 228.8,351.8 231.2,330.0 232.5,327.5 235.0,345.0 237.5,355.0 240.0,357.0 250.0,357.0 253.8,370.0 256.2,400.0 258.8,410.5 272.5,410.5 274.0,390.0 275.0,377.5 277.5,369.5 280.0,371.2 294.5,371.2 296.2,337.5 298.0,325.0 299.5,308.8 301.2,315.0 317.0,315.0 318.8,375.0 321.2,380.0 323.0,365.0 325.0,361.8 336.2,361.2 338.8,368.8 341.2,368.8 343.8,356.2 346.2,354.5 357.5,355.0 361.2,365.0 363.0,377.5 366.2,376.2 382.5,377.0 386.2,365.0 390.0,360.5 401.2,360.0 403.8,351.2 406.2,357.5 408.8,385.0 411.2,392.5 422.5,392.5 425.0,386.2 427.0,381.2 430.0,386.2 445.0,386.2 448.0,390.0 450.0,383.8 466.2,384.5 468.8,390.0 473.0,396.2 487.5,396.2 491.2,385.0 493.8,370.0 496.2,352.5 498.8,350.0 508.8,350.0 511.2,344.5 514.5,350.0 517.5,351.2 520.0,351.5 520.0,351.2 532.0,352.0 533.8,365.0 535.5,373.8 538.0,369.5 552.5,369.5 555.0,355.0 557.5,320.0 559.5,300.0 561.2,291.2 563.8,295.0 573.8,296.2 575.5,315.0 577.5,327.5 579.5,377.5 581.2,402.5 583.8,413.8 586.2,410.5 596.2,410.0 598.8,395.0 600.5,377.5 603.8,381.2 620.0,382.0 622.5,383.8 624.5,362.5 627.0,352.0 641.2,351.2 643.8,365.0 645.5,395.0 648.8,397.5 660.0,397.5 662.5,403.8 666.2,412.5 670.0,417.5 683.0,417.5 684.5,390.0 685.5,370.0 687.0,360.0 690.0,346.2 692.5,347.0 704.5,347.5 706.2,372.5 708.8,390.0 712.0,402.5 727.5,402.5 730.0,390.0 732.5,373.8 735.0,371.2 746.2,372.0 748.8,380.0 751.2,376.2 770.0,376.2 770.0,378.8 771.2,365.0 773.8,362.5 782.5,363.0 785.5,370.0 788.8,377.5 792.5,379.5 803.8,379.5 807.5,384.5 826.2,384.5 830.0,390.0 832.5,402.5 835.0,406.2 850.0,405.5 855.0,411.2 870.0,412.0 872.5,409.5 875.5,413.8 877.5,419.5 890.0,418.8 892.5,415.0 912.5,418.0 915.0,420.0 920.0,425.0 926.2,427.0 932.5,427.5 936.2,435.0 940.0,437.5 955.0,437.0 958.8,430.0 961.2,420.0 963.8,408.0 977.5,408.8 980.0,412.5 982.5,420.0 985.0,410.0 1000.0,409.5 1002.5,390.0 1005.0,365.0 1007.5,354.5 1021.2,353.8 1023.0,343.8 1025.0,342.5 1027.5,348.8 1030.5,350.0" fill="none" stroke="#0ccaca" stroke-width="1.6" stroke-linejoin="round" stroke-linecap="round"/>
<polyline points="23.5,270.0 38.8,270.0 41.2,261.8 62.5,261.8 105.0,261.0 106.2,226.2 127.5,225.8 130.0,203.0 149.2,203.0 151.8,220.8 171.2,220.8 173.2,251.2 192.5,251.2 195.0,282.5 213.8,282.5 214.5,297.5 215.0,302.5 217.5,310.0 235.0,310.0 237.5,306.2 256.2,305.5 258.8,290.0 258.8,269.5 270.0,269.5 278.8,269.5 281.2,247.5 301.2,247.0 303.0,224.5 322.5,224.5 325.0,227.5 343.8,227.5 346.2,246.2 366.2,246.2 368.2,265.0 386.2,265.5 388.0,289.5 408.8,289.5 411.2,284.5 430.0,284.5 431.2,265.0 451.2,264.5 453.8,249.5 473.8,249.0 476.2,245.0 495.0,245.0 497.5,249.5 517.5,249.5 520.0,247.5 520.0,247.5 536.2,247.5 539.5,253.0 558.8,253.0 561.2,272.5 580.0,272.5 581.8,287.5 581.8,292.5 582.5,297.5 624.5,297.5 627.0,308.8 646.2,308.8 648.8,303.0 667.5,303.0 670.0,292.5 670.8,291.2 687.5,290.0 690.0,273.8 710.0,273.8 712.5,259.5 731.2,259.5 734.2,254.5 770.0,254.5 770.0,254.5 775.0,254.5 777.5,261.2 796.2,261.2 799.5,268.8 818.8,269.5 821.8,282.5 838.8,283.0 840.8,290.0 842.5,293.0 861.2,293.0 863.8,295.0 882.5,295.0 884.0,291.2 885.0,282.5 904.5,282.5 907.0,259.5 927.0,258.8 929.2,233.0 970.0,232.5 972.5,238.2 990.0,238.8 992.5,260.0 1012.5,260.0 1015.0,286.2 1030.5,287.0" fill="none" stroke="#e6e6e6" stroke-width="1.45" stroke-linejoin="round" stroke-linecap="round"/>
<polyline points="23.5,174.5 102.5,174.5 106.2,180.0 127.5,179.2 130.0,187.0 149.2,187.0 151.8,174.5 256.2,174.5 258.8,180.5 270.0,180.5 278.8,180.5 281.2,188.2 300.0,188.8 302.5,200.0 322.5,200.5 323.8,198.0 343.8,197.5 346.2,187.5 366.2,187.0 368.8,185.8 386.2,185.8 388.8,178.0 428.8,178.0 431.2,180.8 451.2,180.8 453.8,179.5 473.8,179.5 476.2,175.0 520.0,174.5 520.0,174.5 580.0,174.5 582.5,176.8 605.0,176.8 607.5,175.8 625.0,175.8 627.5,174.2 645.0,174.2 647.5,175.0 667.5,175.0 670.0,176.8 687.5,176.8 690.5,184.5 710.0,184.5 712.5,185.8 731.2,185.8 733.8,182.0 753.8,182.0 756.2,174.5 770.0,174.5 770.0,174.5 796.2,174.5 799.5,175.8 818.8,175.8 821.2,176.5 838.8,176.5 841.2,177.2 861.2,177.2 863.8,177.5 882.5,177.5 885.0,179.0 905.0,179.0 907.5,182.5 926.2,182.5 929.2,186.2 948.0,186.2 950.5,184.0 970.0,184.0 972.5,179.0 990.0,179.0 992.5,181.2 1012.5,181.2 1015.0,174.5 1030.5,174.5" fill="none" stroke="#00b000" stroke-width="1.5" stroke-linejoin="round" stroke-linecap="round"/>
<polyline points="23.5,221.5 38.8,221.5 41.2,232.5 62.5,232.0 82.5,231.5 85.0,237.5 105.0,237.5 106.2,268.0 127.5,268.0 129.5,290.0 129.2,295.0 150.0,295.5 156.2,296.2 171.2,296.2 172.5,260.0 192.5,260.0 195.0,225.0 215.0,224.5 217.5,215.5 235.0,215.5 237.5,230.5 256.2,231.2 258.8,254.2 270.0,254.2 278.8,254.2 281.2,285.0 300.0,285.0 301.2,290.0 302.0,315.0 343.8,315.5 346.2,303.8 366.2,303.0 367.2,292.5 368.8,283.0 386.2,282.5 388.8,263.0 407.5,263.0 410.0,267.5 429.5,268.0 431.2,280.0 451.2,280.5 453.2,290.0 453.8,293.8 472.5,293.8 475.0,302.5 495.0,302.5 497.5,306.2 517.5,307.0 520.0,312.0 520.0,312.0 558.8,312.0 560.0,307.0 581.2,307.0 583.8,275.0 623.8,275.0 627.0,265.0 645.0,265.0 648.0,270.0 667.5,270.0 670.0,273.2 687.5,273.2 690.0,287.5 710.0,288.8 711.2,295.0 712.5,299.5 731.2,299.5 733.8,308.0 753.8,308.0 756.2,318.8 770.0,318.8 770.0,318.8 776.2,318.8 778.8,317.0 796.2,316.2 799.5,305.5 818.8,305.5 820.8,292.5 822.0,288.8 838.8,288.0 840.5,274.5 861.2,274.0 863.8,270.5 882.5,270.5 885.0,278.8 904.5,278.8 905.8,288.8 906.2,293.8 927.0,294.5 929.2,312.0 990.0,312.5 992.0,292.5 993.0,282.5 1012.5,282.5 1014.5,263.0 1030.5,263.0" fill="none" stroke="#e07a00" stroke-width="1.45" stroke-linejoin="round" stroke-linecap="round"/>
<polyline points="23.3,288.0 28.3,248.0 32.3,284.7 32.5,290.0 36.2,350.0 40.0,342.5 45.0,290.0 45.7,274.7 48.3,224.7 51.7,268.0 53.3,294.7 58.3,291.3 61.7,301.3 65.0,294.7 68.3,251.3 70.7,198.0 74.0,251.3 76.7,294.7 80.0,218.0 83.3,178.0 85.0,221.3 87.3,211.3 91.7,168.0 95.0,144.7 96.7,143.0 98.3,144.7 100.0,168.0 101.7,171.3 104.0,151.3 105.0,201.3 108.3,234.7 111.7,231.3 113.3,288.0 116.2,295.0 118.8,315.0 121.2,337.5 123.8,312.5 126.2,322.5 128.8,350.0 131.2,325.0 133.8,330.0 136.2,290.0 136.7,251.3 140.0,218.0 141.7,204.7 144.0,244.7 146.7,288.0 148.3,244.7 151.7,251.3 154.0,248.0 156.7,234.7 159.3,258.0 161.7,264.7 165.0,298.0 168.3,291.3 171.7,299.7 175.0,264.7 178.3,243.0 181.7,258.0 186.7,258.0 190.0,251.3 192.7,264.7 195.0,274.7 197.3,269.7 200.0,304.7 203.3,284.7 205.0,249.7 208.3,271.3 211.7,258.0 213.3,278.0 216.0,281.3 218.3,298.0 221.7,261.3 224.0,223.0 226.7,261.3 230.0,278.0 233.3,264.7 236.7,294.7 238.3,303.0 241.7,268.0 243.3,241.3 246.0,231.3 248.3,246.3 250.0,221.3 253.3,249.7 256.7,218.0 259.3,194.7 263.3,193.0 265.0,209.7 268.3,189.7 271.7,189.7 273.3,208.0 276.0,193.0 278.3,198.0 280.7,189.7 285.0,189.7 288.3,201.3 291.7,198.0 293.3,238.0 296.7,218.0 300.0,211.3 303.3,221.3 306.7,231.3 310.0,209.7 313.3,221.3 316.0,176.3 318.3,208.0 321.7,238.0 325.0,198.0 328.3,204.7 332.7,171.3 335.0,184.7 338.3,208.0 341.7,221.3 345.0,218.0 348.3,231.3 350.0,239.7 353.3,218.0 356.7,189.7 360.0,201.3 360.5,223.8 363.0,203.8 366.2,210.0 368.8,202.5 371.2,212.5 373.8,185.0 375.0,175.0 376.2,212.5 380.0,222.5 383.8,230.0 386.2,207.5 388.0,232.5 390.5,201.2 393.0,222.5 396.2,188.8 398.8,207.5 400.0,206.2 402.5,250.0 405.0,235.0 407.0,196.2 408.8,200.0 410.0,228.8 412.5,206.2 415.0,183.8 416.2,205.0 418.8,221.2 421.2,207.5 423.8,185.0 425.0,195.0 427.0,208.8 428.8,202.5 430.5,236.2 432.0,211.2 433.8,232.5 436.2,217.5 438.0,225.0 440.0,240.0 442.5,206.2 445.0,236.2 447.5,225.0 450.0,206.2 453.2,206.2 455.0,217.5 457.5,232.5 461.2,247.5 465.0,210.0 468.8,211.2 470.0,251.2 473.8,226.2 476.2,233.8 478.8,251.2 481.2,228.8 483.8,217.5 487.0,172.5 489.5,182.5 492.0,181.2 494.5,193.8 497.5,180.0 500.5,150.0 502.5,197.5 505.0,212.5 507.5,235.0 510.0,222.5 513.8,217.5 516.2,227.5 520.0,232.5 520.0,232.5 522.5,255.0 525.5,242.5 527.5,285.0 530.0,307.5 532.5,320.0 535.0,315.0 537.5,300.0 538.8,320.0 540.5,281.2 542.5,295.0 545.0,335.0 547.5,346.2 550.0,337.5 552.5,302.5 553.8,270.0 555.5,290.0 557.0,280.0 558.8,297.5 561.2,257.5 563.8,225.0 566.2,210.0 569.5,187.5 573.0,215.0 575.0,240.0 577.5,262.5 580.0,257.5 582.5,280.0 585.0,265.0 587.0,253.8 590.0,251.2 592.5,270.0 594.5,245.0 596.2,265.0 598.8,275.0 600.0,307.5 602.0,275.0 603.8,290.0 606.2,297.5 608.8,306.2 611.2,315.0 613.8,335.0 616.2,338.8 618.8,350.0 621.2,331.2 622.5,343.8 624.5,330.0 626.2,355.0 628.0,367.0 630.0,365.0 632.5,362.5 635.0,350.0 637.5,325.0 639.5,265.0 641.2,222.5 641.8,197.5 643.8,240.0 647.0,217.5 650.0,252.5 652.5,255.0 655.0,282.5 658.0,247.5 660.0,265.0 662.0,297.5 665.0,287.5 667.5,290.0 670.0,286.2 672.5,300.0 675.0,320.0 677.5,305.0 680.0,280.0 682.5,262.5 685.0,290.0 687.5,305.0 690.0,290.0 692.5,305.0 695.0,295.0 697.5,275.0 698.8,261.2 701.2,276.2 703.8,287.5 706.2,292.5 710.0,283.8 712.5,297.5 715.0,306.2 717.5,302.5 718.8,280.0 722.5,263.8 725.0,280.0 727.5,275.0 731.2,292.5 733.8,310.0 735.0,312.5 737.5,281.2 740.0,307.5 743.8,276.2 746.2,287.5 748.8,326.2 751.2,307.5 753.8,290.0 755.0,283.8 757.5,302.5 760.0,295.0 763.8,308.8 766.2,292.5 768.8,311.2 770.0,297.5 772.5,288.8 775.0,295.0 777.5,308.8 781.2,295.0 783.8,290.0 786.2,283.8 788.8,297.5 791.2,295.0 793.8,312.5 796.2,301.2 798.8,307.5 801.2,303.8 803.0,293.8 806.2,300.0 808.8,297.5 811.2,303.8 813.8,300.0 817.0,290.0 820.0,305.0 823.0,325.0 826.2,305.0 828.8,293.8 831.2,310.0 834.5,320.0 837.5,305.0 840.0,287.5 842.5,302.5 845.0,300.0 848.0,308.8 851.2,295.0 853.8,305.0 856.2,316.2 858.8,303.8 862.0,317.5 864.5,300.0 867.5,290.0 870.0,285.0 872.5,313.8 875.0,317.5 878.0,325.0 881.2,310.0 883.8,292.5 886.2,288.8 889.5,302.5 892.5,322.5 895.0,307.5 897.5,300.0 900.0,305.0 902.5,317.5 905.0,326.2 907.5,290.0 908.8,286.2 911.2,302.5 915.0,297.5 917.5,305.0 920.0,302.5 923.8,323.8 926.2,305.0 928.8,285.0 931.2,302.5 933.8,290.0 937.0,325.0 940.0,315.0 942.5,297.5 945.0,295.0 947.0,288.8 950.5,302.5 952.5,313.8 955.0,306.2 957.5,308.8 961.2,297.5 965.0,278.8 967.5,283.8 970.0,276.2 972.0,280.0 973.8,276.2 975.5,295.0 978.8,315.0 981.2,328.8 983.8,315.0 985.5,332.5 987.5,315.0 990.0,308.8 992.0,290.0 992.5,273.8 995.0,287.5 997.5,302.5 1000.0,297.5 1003.8,296.2 1007.5,317.5 1010.0,285.0 1011.2,275.0 1012.5,265.0 1013.8,280.0 1016.2,307.5 1018.8,323.8 1021.2,300.0 1023.8,297.5 1026.2,315.0 1028.8,302.5 1030.5,301.2" fill="none" stroke="#8a008a" stroke-width="1.05" stroke-linejoin="round" stroke-linecap="round"/>
</g>
</svg>
<div id="overlay">
<div class="abs" style="left:360px;top:126px;font-size:9px;line-height:11px;color:#2a2ae6;white-space:nowrap;letter-spacing:-.25px" id="ctitle">历史趋势---022---分区喷氨B侧</div>
<div class="abs" id="tstamp" style="left:983px;top:125px;width:85px;height:11px;background:#000;color:#cfcfcf;font-size:8.7px;line-height:11px;text-align:center;white-space:nowrap;letter-spacing:-.05px;overflow:hidden">2019-12-23, 13:05:00</div>
<div class="ax yl" style="top:139.0px">100%</div>
<div class="abs" style="left:20.5px;top:143.5px;width:3px;height:1px;background:#666"></div>
<div class="ax yl" style="top:223.3px">75%</div>
<div class="abs" style="left:20.5px;top:227.8px;width:3px;height:1px;background:#666"></div>
<div class="ax yl" style="top:308.0px">50%</div>
<div class="abs" style="left:20.5px;top:312.5px;width:3px;height:1px;background:#666"></div>
<div class="ax yl" style="top:392.6px">25%</div>
<div class="abs" style="left:20.5px;top:397.1px;width:3px;height:1px;background:#666"></div>
<div class="ax yl" style="top:476.5px">0%</div>
<div class="abs" style="left:20.5px;top:481.0px;width:3px;height:1px;background:#666"></div>
<div class="ax xl" style="left:-16.5px;top:489.5px"><span style="letter-spacing:.33px">2019-12-23</span><br><span style="letter-spacing:.5px">09:00:00</span></div>
<div class="abs" style="left:23.0px;top:483px;width:1px;height:4px;background:#555"></div>
<div class="ax xl" style="left:235.3px;top:489.5px"><span style="letter-spacing:.33px">2019-12-23</span><br><span style="letter-spacing:.5px">10:45:00</span></div>
<div class="abs" style="left:274.8px;top:483px;width:1px;height:4px;background:#555"></div>
<div class="ax xl" style="left:487.0px;top:489.5px"><span style="letter-spacing:.33px">2019-12-23</span><br><span style="letter-spacing:.5px">12:30:00</span></div>
<div class="abs" style="left:526.5px;top:483px;width:1px;height:4px;background:#555"></div>
<div class="ax xl" style="left:738.8px;top:489.5px"><span style="letter-spacing:.33px">2019-12-23</span><br><span style="letter-spacing:.5px">14:15:00</span></div>
<div class="abs" style="left:778.3px;top:483px;width:1px;height:4px;background:#555"></div>
<div class="ax xl" style="left:990.6px;top:489.5px"><span style="letter-spacing:.33px">2019-12-23</span><br><span style="letter-spacing:.5px">16:00:00</span></div>
<div class="abs" style="left:1030.1px;top:483px;width:1px;height:4px;background:#555"></div>
<div class="abs" style="left:610.3px;top:482.5px;width:2px;height:6px;background:#2a2a2a"></div>
<div class="rv" style="top:145.7px;color:#f0566a">100.&nbsp;0</div>
<div class="rv" style="top:157.0px;color:#5a5af0">100.&nbsp;0</div>
<div class="rv" style="top:168.3px;color:#eaea70">100.&nbsp;0</div>
<div class="rv" style="top:179.6px;color:#58e6f0">100.&nbsp;0</div>
<div class="rv" style="top:190.9px;color:#eef2f8">110.&nbsp;0</div>
<div class="rv" style="top:202.2px;color:#4fe04f">110.&nbsp;0</div>
<div class="rv" style="top:213.5px;color:#f0a060">110.&nbsp;0</div>
<div class="rv" style="top:224.8px;color:#a050b0">150.&nbsp;0</div>
<div class="rv" style="top:392.0px;color:#a050b0">0.&nbsp;0</div>
<div class="rv" style="top:403.2px;color:#f0a060">0.&nbsp;0</div>
<div class="rv" style="top:414.5px;color:#4fe04f">0.&nbsp;0</div>
<div class="rv" style="top:425.8px;color:#eef2f8">0.&nbsp;0</div>
<div class="rv" style="top:437.0px;color:#58e6f0">0.&nbsp;0</div>
<div class="rv" style="top:448.2px;color:#eaea70">0.&nbsp;0</div>
<div class="rv" style="top:459.5px;color:#5a5af0">0.&nbsp;0</div>
<div class="rv" style="top:470.8px;color:#f0566a">0.&nbsp;0</div>
<div class="abs" style="left:1032px;top:143.5px;width:11px;height:1px;background:#888"></div>
<div class="abs" style="left:1032px;top:482px;width:11px;height:1px;background:#555"></div>
<div class="cl" style="left:506.4px;top:152.8px;color:#00e800"><span style="display:inline-block;transform:scaleX(1.03);transform-origin:0 50%;margin-right:0.53px">#2</span><span style="font-size:14.600px;letter-spacing:.64px;margin-left:.4px;margin-right:-.4px">分区调节阀指令</span><span style="margin-left:2.5px">（</span><span style="display:inline-block;transform:scaleX(0.96);transform-origin:0 50%;margin-right:-0.57px">%</span><span>）</span></div>
<div class="cl" style="left:732.4px;top:230.5px;color:#f4f4f4"><span style="display:inline-block;transform:scaleX(1.03);transform-origin:0 50%;margin-right:0.53px">#1</span><span style="font-size:14.600px;letter-spacing:.64px;margin-left:.4px;margin-right:-.4px">分区调节阀指令</span><span style="margin-left:2.5px">（</span><span style="display:inline-block;transform:scaleX(0.96);transform-origin:0 50%;margin-right:-0.57px">%</span><span>）</span></div>
<div class="cl" style="left:350.4px;top:308.0px;color:#ff8a00"><span style="display:inline-block;transform:scaleX(1.03);transform-origin:0 50%;margin-right:0.53px">#3</span><span style="font-size:14.600px;letter-spacing:.64px;margin-left:.4px;margin-right:-.4px">分区调节阀指令</span><span style="margin-left:2.5px">（</span><span style="display:inline-block;transform:scaleX(0.96);transform-origin:0 50%;margin-right:-0.57px">%</span><span>）</span></div>
<div class="cl" style="left:754px;top:333.0px;color:#0000ff"><span style="display:inline-block;transform:scaleX(1.03);transform-origin:0 50%;margin-right:0.53px">#2</span><span style="font-size:14.600px;letter-spacing:.64px;margin-left:.4px;margin-right:-.4px">分区出口</span><span style="margin-left:2.5px">（</span><span style="display:inline-block;transform:scaleX(1.115);transform-origin:0 50%;margin-right:7.26px">mg/Nm3</span><span>）</span></div>
<div class="cl" style="left:306.2px;top:429.5px;color:#ffff00"><span style="display:inline-block;transform:scaleX(1.03);transform-origin:0 50%;margin-right:0.53px">#3</span><span style="font-size:14.600px;letter-spacing:.64px;margin-left:.4px;margin-right:-.4px">分区出口</span><span style="display:inline-block;transform:scaleX(1.05);transform-origin:0 50%;margin-right:4.25px">NOx</span><span style="margin-left:2.5px">（</span><span style="display:inline-block;transform:scaleX(1.115);transform-origin:0 50%;margin-right:7.26px">mg/Nm3</span><span>）</span></div>
<div class="cl" style="left:664.6px;top:430.0px;color:#00f0f0"><span style="font-size:14.600px;letter-spacing:.64px;margin-left:.4px;margin-right:-.4px">平均出口</span><span style="display:inline-block;transform:scaleX(1.05);transform-origin:0 50%;margin-right:4.25px">NOx</span><span style="margin-left:2.5px">（</span><span style="display:inline-block;transform:scaleX(1.115);transform-origin:0 50%;margin-right:7.26px">mg/Nm3</span><span>）</span></div>
<div class="cl" style="left:151.2px;top:451.5px;color:#ff0000"><span style="display:inline-block;transform:scaleX(1.03);transform-origin:0 50%;margin-right:0.53px">#1</span><span style="font-size:14.600px;letter-spacing:.64px;margin-left:.4px;margin-right:-.4px">分区出口</span><span style="display:inline-block;transform:scaleX(1.05);transform-origin:0 50%;margin-right:4.25px">NOx</span><span style="margin-left:2.5px">（</span><span style="display:inline-block;transform:scaleX(1.115);transform-origin:0 50%;margin-right:7.26px">mg/Nm3</span><span>）</span></div>
<div class="lg" style="left:12.5px;top:514.0px">B侧反应器<span class="l">1</span>号分区出口<span class="l">NOx&nbsp;&nbsp;20HSK60</span>&nbsp;<b style="letter-spacing:.2px">···</b></div>
<div class="vb" style="left:184.0px;top:513.5px">30.33</div>
<div class="sw" style="left:225.0px;top:517.5px;background:#ff0000"></div>
<div class="lg" style="left:237.0px;top:514.0px"><span class="l">mg/m3</span></div>
<div class="lg" style="left:12.5px;top:529.7px">B侧反应器<span class="l">1</span>号分区调节阀指令<span class="l">&nbsp;&nbsp;20HS</span>&nbsp;<b style="letter-spacing:.2px">···</b></div>
<div class="vb" style="left:184.0px;top:529.2px">60.10</div>
<div class="sw" style="left:225.0px;top:533.2px;background:#ffffff"></div>
<div class="lg" style="left:237.0px;top:529.7px"><span class="l">%</span></div>
<div class="lg" style="left:281.5px;top:514.0px">B侧反应器<span class="l">2</span>号分区出口<span class="l">NOx&nbsp;&nbsp;20HSK70</span>&nbsp;<b style="letter-spacing:.2px">···</b></div>
<div class="vb" style="left:453.0px;top:513.5px">30.83</div>
<div class="sw" style="left:494.0px;top:517.5px;background:#0000ff"></div>
<div class="lg" style="left:506.0px;top:514.0px"><span class="l">mg/m3</span></div>
<div class="lg" style="left:281.5px;top:529.7px">B侧反应器<span class="l">2</span>号分区调节阀指令<span class="l">&nbsp;&nbsp;20HS</span>&nbsp;<b style="letter-spacing:.2px">···</b></div>
<div class="vb" style="left:453.0px;top:529.2px">99.48</div>
<div class="sw" style="left:494.0px;top:533.2px;background:#00ff00"></div>
<div class="lg" style="left:506.0px;top:529.7px"><span class="l">%</span></div>
<div class="lg" style="left:551px;top:514.0px">B侧反应器<span class="l">3</span>号分区出口<span class="l">NOx&nbsp;&nbsp;20HSK80</span>&nbsp;<b style="letter-spacing:.2px">···</b></div>
<div class="vb" style="left:722.5px;top:513.5px">27.76</div>
<div class="sw" style="left:763.5px;top:517.5px;background:#ffff00"></div>
<div class="lg" style="left:775.5px;top:514.0px"><span class="l">mg/m3</span></div>
<div class="lg" style="left:551px;top:529.7px">B侧反应器<span class="l">3</span>号分区调节阀指令<span class="l">&nbsp;&nbsp;20HS</span>&nbsp;<b style="letter-spacing:.2px">···</b></div>
<div class="vb" style="left:722.5px;top:529.2px">67.37</div>
<div class="sw" style="left:763.5px;top:533.2px;background:#ff8000"></div>
<div class="lg" style="left:775.5px;top:529.7px"><span class="l">%</span></div>
<div class="lg" style="left:820.5px;top:514.0px">B侧反应器出口<span class="l">NOx</span>平均值<span class="l">&nbsp;&nbsp;20HSK40PJ</span></div>
<div class="vb" style="left:992.0px;top:513.5px">29.65</div>
<div class="sw" style="left:1033.0px;top:517.5px;background:#00ffff"></div>
<div class="lg" style="left:1045.0px;top:514.0px"><span class="l">mg/m3</span></div>
<div class="lg" style="left:820.5px;top:529.7px">#1氨混合器调节阀后流量&nbsp;<span class="l">&nbsp;&nbsp;20HSK21C</span>&nbsp;<b style="letter-spacing:.2px">···</b></div>
<div class="vb" style="left:992.0px;top:529.2px">72.55</div>
<div class="sw" style="left:1033.0px;top:533.2px;background:#800080"></div>
<div class="lg" style="left:1045.0px;top:529.7px"><span class="l">Nm3/h</span></div>
</div>
<div id="toolbar" class="abs">
  <div class="combo" style="left:12px;width:65px">单一<i></i></div>
  <div class="tl" style="left:79.5px">窗口</div>
  <div class="combo" style="left:118px;width:58px">历史<i></i></div>
  <div class="tl" style="left:180px">趋势</div>
  <div class="tl" style="left:239px">显示方式</div>
  <div class="combo" style="left:287px;width:52px">点值<i></i></div>
  <div id="ime" class="abs" style="left:852px;top:3px;width:174px;height:23px;background:#fff;border:1px solid #e2e2e2;border-radius:2px"></div>
  <svg class="abs" style="left:849px;top:1px" width="180" height="27" viewBox="0 0 180 27">
    <g transform="rotate(-8 14 13)"><rect x="3" y="2" width="23" height="22" rx="5" fill="#f4511e"/><path d="M20.5 8.2c-2.2-1.6-8.6-2-9.2 1-.7 3.4 8.8 1.9 8.3 5.8-.4 3.3-7.3 2.9-10 .8" fill="none" stroke="#fff" stroke-width="3" stroke-linecap="round"/></g>
    <g fill="none" stroke="#1e7fd8" stroke-width="1.7"><rect x="31.5" y="9.5" width="10" height="6"/><path d="M36.500 5.500v16"/></g>
    <circle cx="52" cy="10.500" r="1.600" fill="#1e7fd8"/><path d="M57 12.500c1.500 0 2 2-.5 4.500" stroke="#1e7fd8" stroke-width="1.800" fill="none" stroke-linecap="round"/>
    <circle cx="73.500" cy="13.500" r="6.300" fill="none" stroke="#1e7fd8" stroke-width="1.500"/><circle cx="71.300" cy="11.800" r=".9" fill="#1e7fd8"/><circle cx="75.700" cy="11.800" r=".9" fill="#1e7fd8"/><path d="M70.500 15.200c1.500 2.200 4.500 2.200 6 0" fill="none" stroke="#1e7fd8" stroke-width="1.200"/>
    <rect x="90" y="6" width="5" height="10" rx="2.500" fill="#1e7fd8"/><path d="M87.500 13c0 6.500 10 6.500 10 0M92.500 18v3M89.500 21h6" fill="none" stroke="#1e7fd8" stroke-width="1.300"/>
    <rect x="105" y="8" width="15" height="11" rx="1.500" fill="#1e7fd8"/><path d="M107 11h11M107 13.500h11M109 16.300h7" stroke="#cfe4f8" stroke-width="1" stroke-dasharray="1.500 1"/>
    <g fill="#b9bec6"><circle cx="131.500" cy="9.500" r="2.800"/><path d="M126 19c0-7 11-7 11 0z"/><rect x="129.500" y="15" width="10" height="5.500" rx="1" fill="#c9cdd4" stroke="#fff" stroke-width=".8"/></g>
    <path d="M146 8.500l3.200-1.700c1.200 1.600 3.600 1.600 4.800 0l3.200 1.700 1.500 3.300-2.400 1.200v7.500h-9.400v-7.500l-2.400-1.200z" fill="#1e7fd8"/>
    <g fill="#1e7fd8"><rect x="162" y="7" width="5.800" height="5.800"/><rect x="162" y="14.200" width="5.800" height="5.800"/><rect x="169.200" y="14.200" width="5.800" height="5.800"/><rect x="169.800" y="6.400" width="5.200" height="5.200" transform="rotate(12 172.400 9)" opacity=".85"/></g>
  </svg>
</div>
<div id="taskbar" class="abs">
<svg class="abs" style="left:0;top:0" width="1080" height="34" viewBox="0 574 1080 34">
  <!-- start -->
  <g fill="#f2f2f2"><path d="M13.300 586.100l5.700-.8v5.400h-5.700zM19.800 585.200l7.200-1v6.500h-7.200zM13.300 591.500h5.700v5.400l-5.700-.8zM19.800 591.500h7.200v6.500l-7.200-1z"/></g>
  <circle cx="60.800" cy="591.200" r="6.200" fill="none" stroke="#eee" stroke-width="1.800"/>
  <g fill="none" stroke="#b8bcc0" stroke-width="1.100"><rect x="96.300" y="587.300" width="6.500" height="7"/><path d="M94.300 584.800h9.500M94.300 596.800h9.500M107 584.300v5M107 592v5.300"/></g><circle cx="107" cy="590.500" r=".8" fill="#e8e8e8"/>
  <g fill="#e4e4e4" transform="translate(144.200 591.700)"><path d="M.3-.2C-1.500-3.500-8.600-2.500-8.600-6.800c0-3.600 6.300-3.900 8-.6 1.100 2.100 1.100 5 .9 7.200z" transform="rotate(0)"/><path d="M.3-.2C-1.500-3.500-8.600-2.500-8.600-6.800c0-3.600 6.300-3.900 8-.6 1.100 2.100 1.100 5 .9 7.200z" transform="rotate(90)"/><path d="M.3-.2C-1.500-3.500-8.600-2.500-8.600-6.800c0-3.600 6.300-3.900 8-.6 1.100 2.100 1.100 5 .9 7.200z" transform="rotate(180)"/><path d="M.3-.2C-1.500-3.500-8.600-2.500-8.600-6.800c0-3.600 6.300-3.900 8-.6 1.100 2.100 1.100 5 .9 7.200z" transform="rotate(270)"/></g>
  <!-- search -->
  <rect x="165" y="578.700" width="102" height="24" fill="#ebebeb"/>
  <rect x="266.700" y="578.700" width="39.500" height="24" fill="#2288f0"/>
  <g fill="none" stroke="#1e90ff" stroke-width="2.200"><path d="M170.300 591.300h9.500c0-6-9.300-6-9.500 0 .2 6 7.500 6 9.200 2.200"/></g>
  <path d="M168.500 595c-1.500 3.500 2 4 5 2" fill="none" stroke="#49a6ff" stroke-width="1"/>
  <path d="M177.500 585c2.500-1.500 4.500-.8 3.500 2" fill="none" stroke="#49a6ff" stroke-width="1"/>
  <path d="M313 581v20M316 581v20" stroke="#2a3640" stroke-width="1"/>
  <!-- 360 browser -->
  <circle cx="345.200" cy="590.700" r="8.400" fill="#58c42c" stroke="#dff2d6" stroke-width="1.100"/>
  <path d="M341.300 590.900h7.800c0-4.800-7.800-4.900-7.800 0 .1 4.700 5.900 4.900 7.500 1.800" fill="none" stroke="#fff" stroke-width="2.200"/>
  <path d="M338.300 596.500c-1.300 1.800-.3 2.600 1.700 1.600M350.500 582.800c2.300-1.400 3.700-.8 2.700 1.300" fill="none" stroke="#4cc41c" stroke-width="1.100" stroke-linecap="round"/>
  <!-- folder -->
  <path d="M378.500 584h6l1.500 2h10.500v11.500h-18z" fill="#f5c84b"/><path d="M378.500 587.500h18v10h-18z" fill="#ffe08a"/><path d="M382.500 592h10v5.500h-10z" fill="#4aa8e8"/><path d="M384.500 594.500h6v3h-6z" fill="#ffe08a"/>
  <!-- sogou browser -->
  <circle cx="429.500" cy="591" r="9.100" fill="#3f8fee" stroke="#f4f6fa" stroke-width="1.600"/>
  <path d="M426.300 584.300C424.800 589.500 434 592 432.800 598.200" fill="none" stroke="#fff" stroke-width="3.300" stroke-linecap="round"/>
  <!-- edge -->
  <path d="M465 591.800h14.300c.3-5.600-3-8.600-7.300-8.600-4.600 0-8 3.500-8.200 8 .1-3 2.600-4.800 5.300-4.800 2.600 0 4.300 1.300 4.500 3.300h-6.700c-.4 3.800 1.300 6.900 5.800 6.900 2.300 0 4.300-.6 6-1.500v3.200c-2 1-4.300 1.600-6.800 1.600-5.500 0-8.400-3.800-8.100-8.100" fill="#1683e0"/>
  <!-- gear app -->
  <g transform="translate(514 590.500)"><g fill="#3aa0e0"><circle r="7.200"/><g id="tth"><rect x="-1.700" y="-10" width="3.400" height="20" rx=".8"/></g><use href="#tth" transform="rotate(45)"/><use href="#tth" transform="rotate(90)"/><use href="#tth" transform="rotate(135)"/></g><circle r="5" fill="#1d2a44"/><path d="M-3.500 2l3.500-5.500 3.500 5.500z" fill="#d0405a"/><path d="M-4 2.500h8" stroke="#e8e8f0" stroke-width="1"/></g>
  <rect x="497.600" y="606" width="33.800" height="2" fill="#76b9ed"/>
  <!-- active app -->
  <rect x="536" y="574" width="41" height="34" fill="#3a444d"/>
  <rect x="536" y="606" width="41" height="2" fill="#76b9ed"/>
  <g><rect x="547.300" y="591" width="3" height="7" fill="#f08a28"/><rect x="551" y="587" width="3" height="11" fill="#7cc040"/><rect x="555" y="583" width="3" height="10" fill="#58a8e8"/><circle cx="560" cy="595" r="4.600" fill="#f4f4f4" stroke="#d03030" stroke-width="1.800"/><path d="M560 595l2-2.500M560 595h-2" stroke="#555" stroke-width=".9"/></g>
  <!-- tray -->
  <path d="M714.500 579v22" stroke="#2a3640" stroke-width="1.500"/>
  <g transform="rotate(-10 735 581.500)"><rect x="729" y="576.300" width="12.500" height="11" rx="2.500" fill="#f0501e"/><path d="M738.300 579.300c-1.400-1-5-1.100-5.300.6-.4 2 5 1.100 4.800 3.300-.2 1.900-4.100 1.700-5.700.5" fill="none" stroke="#fff" stroke-width="1.700" stroke-linecap="round"/></g>
  <g fill="none" stroke="#e6e6e6" stroke-width="1.200"><circle cx="773.500" cy="586.500" r="2.300"/><path d="M769.500 594.500c0-5 8-5 8 0"/><circle cx="767" cy="590.800" r="1.900"/><path d="M763.800 597.500c0-4.300 6.400-4.300 6.400 0"/></g>
  <g><rect x="797.500" y="584" width="7.500" height="14" rx="1" fill="#6cc030"/><rect x="799" y="581" width="4.500" height="3.500" fill="#e8e8e8"/><path d="M801.200 587v6M799.200 591l2 2.500 2-2.500" stroke="#fff" stroke-width="1" fill="none"/></g>
  <path d="M815.500 593.500l4.500-4.500 4.500 4.500" fill="none" stroke="#e6e6e6" stroke-width="1.300"/>
  <g><rect x="835" y="586.500" width="11" height="6.500" fill="#e8e8e8"/><rect x="833.500" y="585" width="3.500" height="3.500" fill="#e8e8e8"/><path d="M834 584.500l2 1" stroke="#e8e8e8"/></g>
  <g fill="none" stroke-linecap="round"><path d="M856 597.500c0-5.500 4-9.800 9.800-9.800" stroke="#9aa0a6" stroke-width="1.200"/><path d="M858.800 597.500c0-4 3-7 7-7" stroke="#e6e6e6" stroke-width="1.200"/><path d="M861.600 597.500c0-2.400 1.800-4.200 4.200-4.200" stroke="#e6e6e6" stroke-width="1.200"/><circle cx="865" cy="596.800" r=".9" fill="#e6e6e6"/></g>
  <g fill="none" stroke="#e6e6e6" stroke-width="1.100"><path d="M875.500 588.800h2.500l3.500-3v10.400l-3.500-3h-2.500z"/><path d="M883.500 588.500c1.200 1.500 1.200 3.500 0 5M885.500 586.500c2.200 2.700 2.200 6.300 0 9"/></g>
  <g fill="none" stroke="#f2f2f2" stroke-width="1.400"><rect x="895.500" y="587.500" width="9.500" height="5.500"/><path d="M900.200 584v14"/></g>
  <g transform="rotate(-10 924 591)"><rect x="917.800" y="585" width="13" height="11.500" rx="2.500" fill="#f0501e"/><path d="M927.500 588.200c-1.500-1.100-5.300-1.200-5.600.6-.4 2.100 5.300 1.200 5.100 3.500-.2 2-4.400 1.800-6 .5" fill="none" stroke="#fff" stroke-width="1.800" stroke-linecap="round"/></g>
  <circle cx="955" cy="591" r="8.300" fill="#17212b" stroke="#22c55e" stroke-width="1.800"/><path d="M947.500 594.500a8.300 8.300 0 0 0 15 0z" fill="#22c55e"/>
  <path d="M1045.500 585h13v9h-5l-2.300 2.500-2.200-2.500h-3.500z" fill="none" stroke="#eee" stroke-width="1.100"/>
  <path d="M1077.500 574v34" stroke="#556068" stroke-width="1"/>
</svg>
<div class="abs" style="left:184px;top:11px;font-size:8.400px;line-height:12px;color:#222;white-space:nowrap">中信证券开户</div>
<div class="abs" style="left:266.700px;top:11px;width:39.500px;text-align:center;font-size:8.400px;line-height:12px;color:#e8f2ff;white-space:nowrap">搜索一下</div>
<div class="abs" style="left:945px;top:11.500px;width:20px;text-align:center;font-size:9.700px;line-height:11px;color:#fff;letter-spacing:0">22</div>
<div class="abs" style="left:972px;top:2.500px;width:60px;text-align:center;font-size:11px;line-height:13px;color:#f0f0f0;letter-spacing:-.2px">19:02</div>
<div class="abs" style="left:962px;top:18.500px;width:80px;text-align:center;font-size:11px;line-height:13px;color:#f0f0f0;letter-spacing:-.2px">2019/12/25</div>
</div>
</div>
</body>
</html>
